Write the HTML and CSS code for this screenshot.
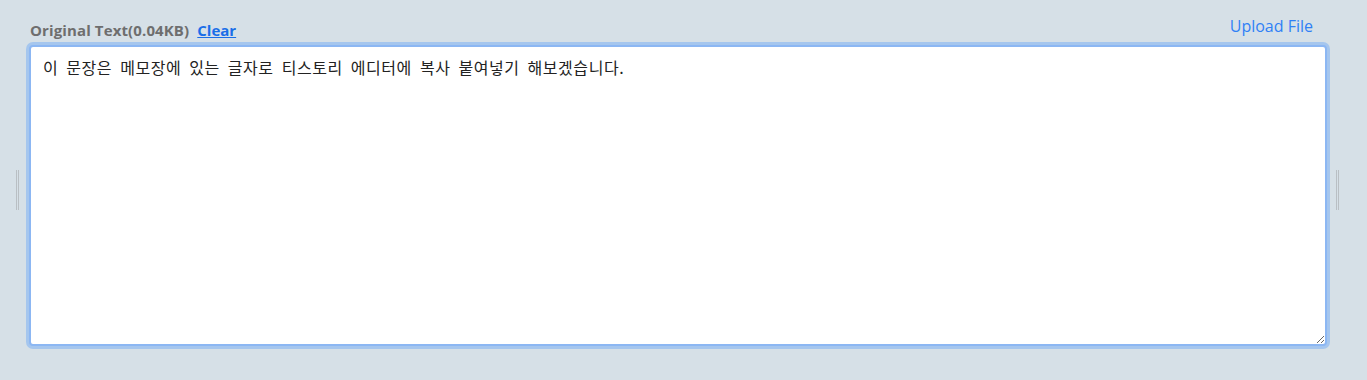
FILE: index.html
```html
<!DOCTYPE html>
<html lang="ko">
<head>
<meta charset="utf-8"/>
<meta content="width=device-width, initial-scale=1.0" name="viewport"/>
<title>Text Size Counter</title>
<link rel="stylesheet" href="styles.css">
</head>
<body>
<main class="editor-row">
    <div class="grip"></div>
    <section class="panel">
        <div class="panel-head">
            <div class="panel-title">
                <span class="label">Original Text(<span id="size">0.04KB</span>)</span>
                <a href="#" class="clear-link" id="clearBtn">Clear</a>
            </div>
            <a href="#" class="upload-link">Upload File</a>
        </div>
        <textarea class="source-text" id="sourceText" spellcheck="false" autofocus>이 문장은 메모장에 있는 글자로 티스토리 에디터에 복사 붙여넣기 해보겠습니다.</textarea>
    </section>
    <div class="grip"></div>
</main>
</body>
</html>
```

FILE: styles.css
```css
html, body {
    margin: 0;
    height: 100%;
}
body {
    background: #d6e0e7;
    font-family: "Open Sans", "Noto Sans", sans-serif;
}
.editor-row {
    display: flex;
    align-items: center;
    padding: 16px 0 0 16px;
}
.grip {
    width: 1px;
    height: 40px;
    border-left: 1px solid #b9bfc4;
    border-right: 1px solid #b9bfc4;
    margin-top: 18px;
}
.panel {
    width: 1298px;
    margin: 0 9px 0 10px;
    display: flex;
    flex-direction: column;
}
.panel-head {
    display: flex;
    justify-content: space-between;
    align-items: flex-end;
    height: 26px;
    padding: 0 14px 0 1px;
    margin-bottom: 3px;
}
.panel-title {
    display: flex;
    gap: 8px;
    font-size: 15px;
    font-weight: bold;
    line-height: 20px;
    margin-bottom: 2px;
}
.label {
    color: #6e6e6e;
    letter-spacing: 0.12px;
}
.clear-link {
    color: #1a6ee8;
    text-decoration: underline;
}
.upload-link {
    color: #2f80f6;
    font-size: 16px;
    text-decoration: none;
    margin-bottom: 5px;
}
.source-text {
    box-sizing: border-box;
    height: 301px;
    width: 100%;
    border: 2px solid #8cb7f3;
    border-radius: 4px;
    box-shadow: 0 0 0 3px #a5c6ee;
    outline: none;
    padding: 8px 12px;
    font-family: "Noto Sans CJK KR", "Noto Sans", sans-serif;
    font-size: 16px;
    letter-spacing: 0.55px;
    word-spacing: 3px;
    color: #222;
    caret-color: #111;
    background: #fff;
    resize: both;
}
```
